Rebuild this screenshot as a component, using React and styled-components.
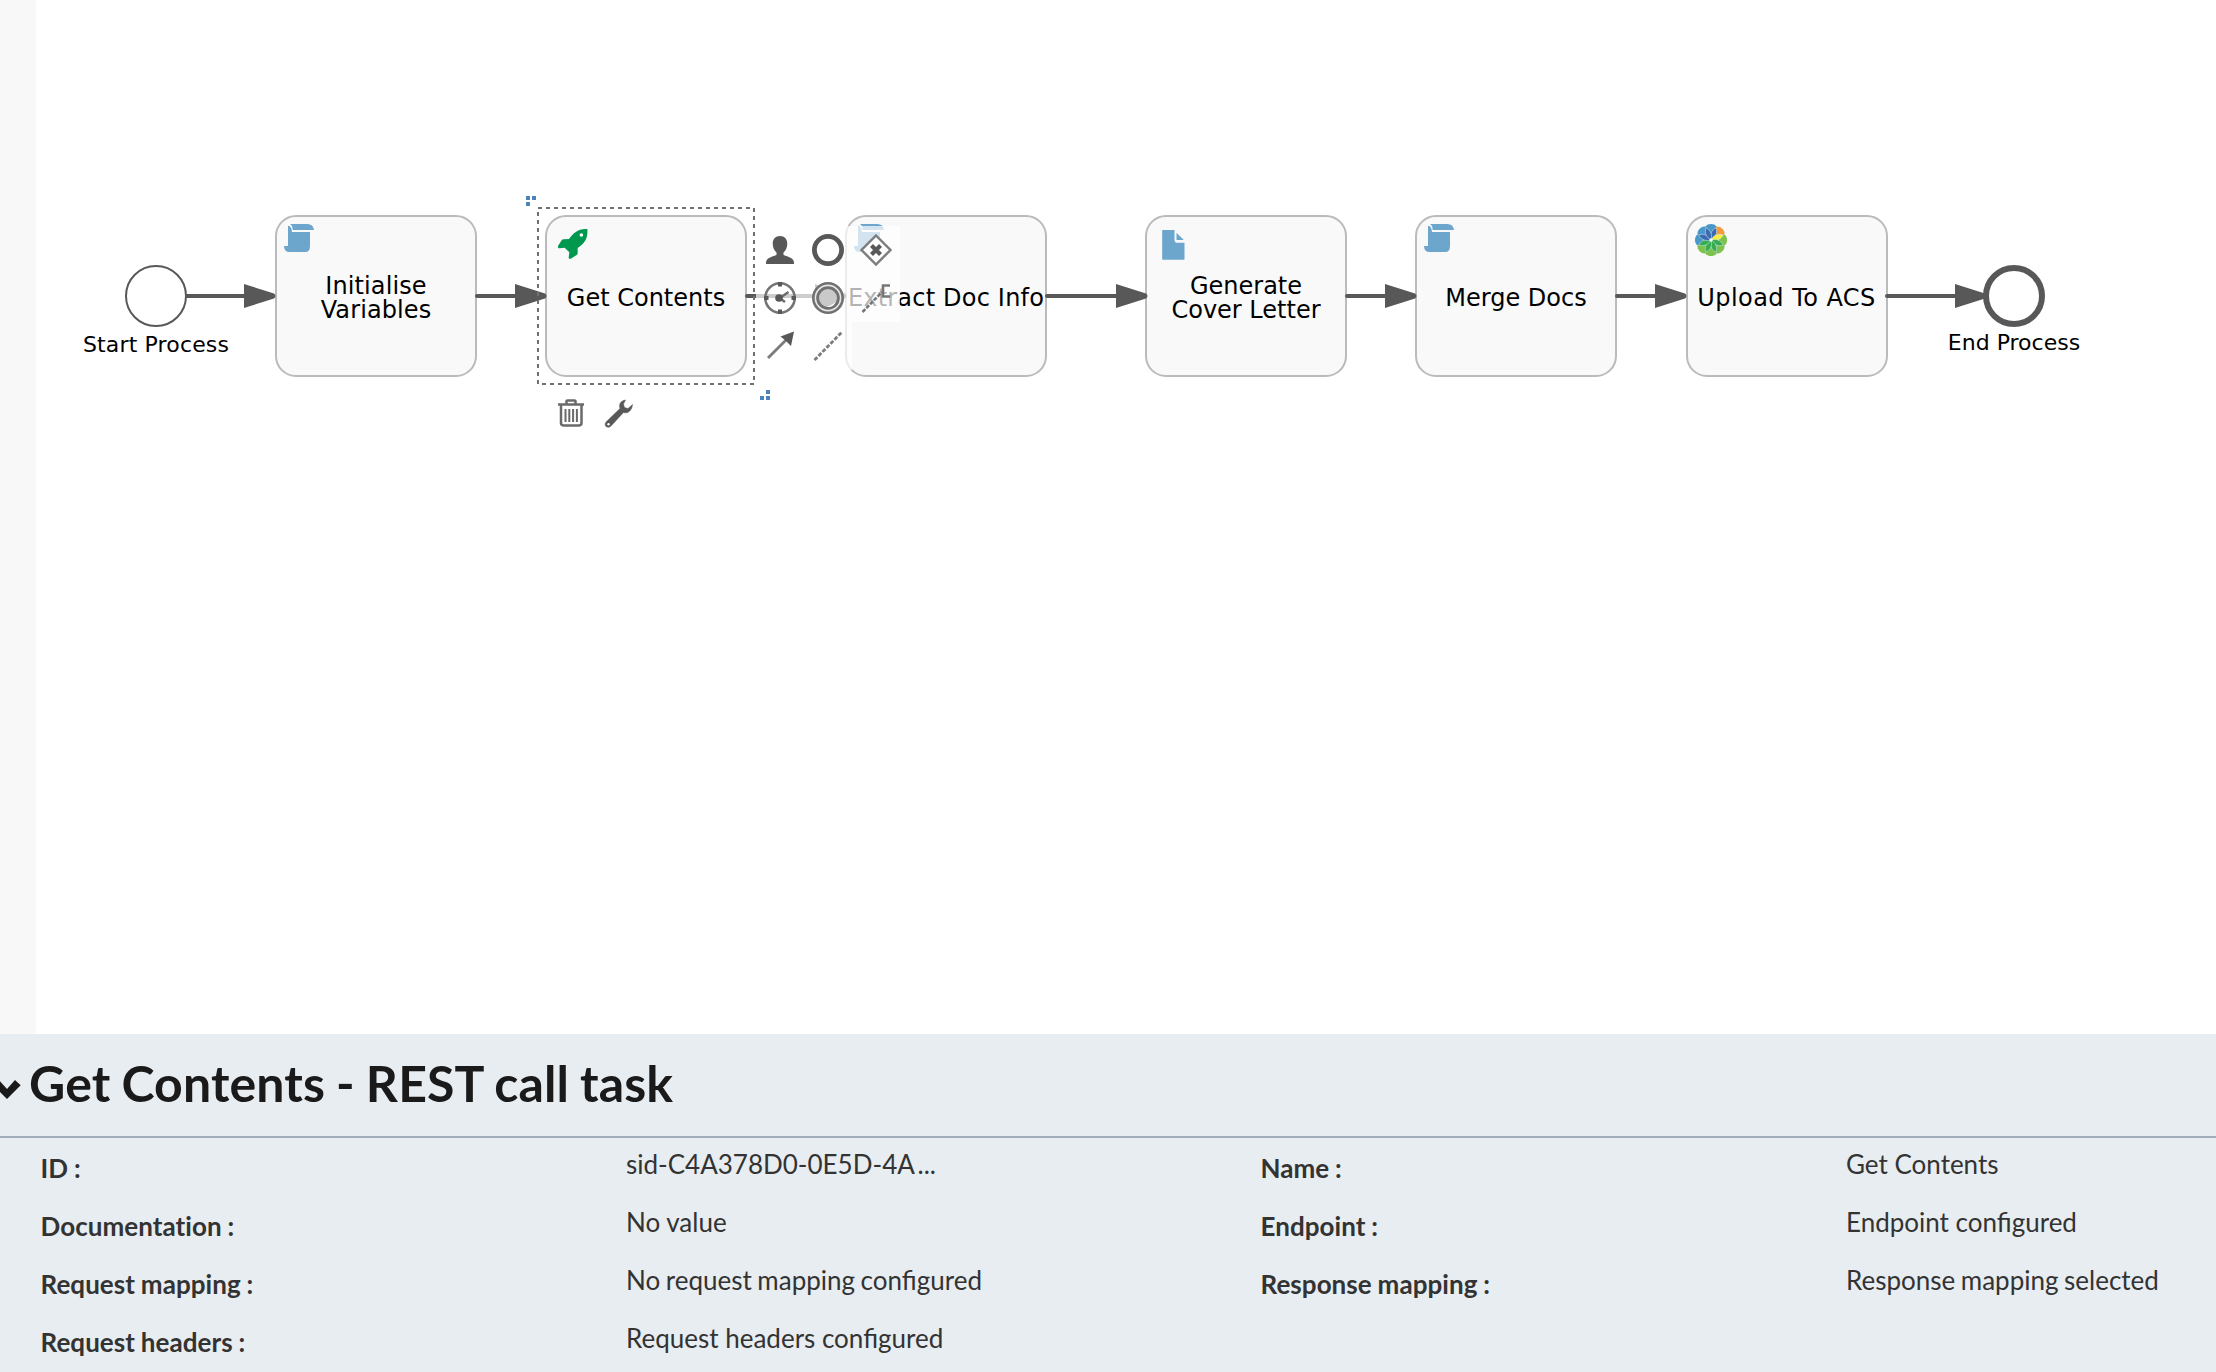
import React from "react";
import styled, { createGlobalStyle } from "styled-components";

const GlobalStyle = createGlobalStyle`
  * { box-sizing: border-box; }
  body { margin: 0; background: #fff; }
`;

const INK = "#585858";
const SKY = "#6ca6cd";

const Page = styled.div`
  display: flex;
  flex-direction: column;
  width: 2216px;
  height: 1372px;
  overflow: hidden;
  font-family: Lato, "Liberation Sans", sans-serif;
`;

const Workspace = styled.main`
  display: flex;
  flex: none;
  height: 1034px;
`;

const Gutter = styled.aside`
  width: 36px;
  background: #f8f8f8;
`;

const Canvas = styled.section`
  position: relative;
  flex: 1;
  background: #fff;
  font-family: Verdana, "DejaVu Sans", sans-serif;
  color: #000;
`;

/* Node coordinates count from the window edge, so the origin undoes the gutter width. */
const Origin = styled.div`
  position: absolute;
  left: -36px;
  top: 0;
`;

const Task = styled.div`
  position: absolute;
  left: ${(p) => p.$x}px;
  top: 215px;
  width: 202px;
  height: 162px;
  display: flex;
  align-items: center;
  justify-content: center;
  border: 2px solid #bbb;
  border-radius: 21px;
  background: #f9f9f9;
`;

const TaskLabel = styled.span`
  padding-top: 4px;
  font-size: 24px;
  line-height: 24px;
  letter-spacing: ${(p) => p.$track}px;
  text-align: center;
  white-space: pre;
`;

const TaskIcon = styled.div`
  position: absolute;
  left: ${(p) => p.$x}px;
  top: ${(p) => p.$y}px;
  line-height: 0;
`;

const EventRing = styled.div`
  position: absolute;
  left: ${(p) => p.$x}px;
  top: 265px;
  width: 62px;
  height: 62px;
  border: ${(p) => p.$weight}px solid ${INK};
  border-radius: 50%;
  background: #fff;
`;

const EventLabel = styled.span`
  position: absolute;
  left: ${(p) => p.$x}px;
  top: ${(p) => p.$y}px;
  transform: translateX(-50%);
  font-size: 22px;
  line-height: 26px;
  letter-spacing: ${(p) => p.$track}px;
  white-space: nowrap;
`;

const FlowSvg = styled.svg`
  position: absolute;
  left: 0;
  top: 190px;
`;

const PadCell = styled.div`
  position: absolute;
  left: ${(p) => p.$x}px;
  top: ${(p) => p.$y}px;
  width: 48px;
  height: 48px;
  display: grid;
  place-items: center;
  background: rgba(255, 255, 255, 0.7);
`;

const PadSvg = styled.svg`
  width: 32px;
  height: 32px;
  overflow: visible;
`;

const Details = styled.section`
  flex: 1;
  background: #e8edf1;
  color: #333;
`;

const DetailsHeader = styled.header`
  display: flex;
  align-items: center;
  height: 104px;
  border-bottom: 2px solid #a1adb8;
`;

const Chevron = styled.svg`
  flex: none;
  width: 21px;
  height: 19px;
  margin: 8px 8px 0 0;
`;

const Title = styled.h1`
  margin: 0 0 4px;
  font-size: 50px;
  font-weight: 700;
  line-height: 60px;
  letter-spacing: 0.13px;
  word-spacing: -1.3px;
  color: #1a1a1a;
  white-space: nowrap;
`;

const Properties = styled.dl`
  display: grid;
  grid-template-columns: 586px 634px 586px 1fr;
  grid-auto-rows: 58px;
  margin: 0;
  padding-left: 40px;
`;

const Term = styled.dt`
  padding: 14px 0 0 0.5px;
  font-size: 26px;
  font-weight: 700;
  line-height: 32px;
  letter-spacing: 0.05px;
  word-spacing: -0.5px;
  font-variant-ligatures: none;
  white-space: nowrap;
`;

const Value = styled.dd`
  margin: 0;
  padding-top: 10px;
  font-size: 26px;
  line-height: 32px;
  word-spacing: ${(p) => p.$gap}px;
  white-space: nowrap;
`;

function ScriptIcon() {
  return (
    <svg width="30" height="28" viewBox="672 102 90 84" fill={SKY}>
      <path d="M684 107C692 108 695 114 696 126L750 126V168Q750 186 736 186H688Q673 186 672 168H684Z" />
      <path d="M690 102H742Q760 102 762 120H698Q698 107 690 102Z" />
    </svg>
  );
}

function RocketIcon() {
  return (
    <svg width="30" height="30" viewBox="115 117 90 90">
      <path
        fill="#00984f"
        d="M203 117C176 116 162 128 148 147L132 148Q128 148 126 151L115 168Q114 175 120 175L135 173L149 187L147 203Q148 208 153 206L171 195Q174 193 174 189L174 174C197 159 205 144 203 117Z"
      />
      <circle cx="185" cy="135" r="5.5" fill="#f9f9f9" />
    </svg>
  );
}

function DocumentIcon() {
  return (
    <svg width="23" height="30" viewBox="188 120 68 90" fill={SKY}>
      <path d="M190 120H225V150Q225 158 233 158H255V207Q255 209 253 209H190Q188 209 188 207V122Q188 120 190 120Z" />
      <path d="M231 128L253 150H231Z" />
    </svg>
  );
}

const LOBES = [
  [0, "#4a98c9"],
  [315, "#4a98c9"],
  [270, "#4a98c9"],
  [45, "#f79a3c"],
  [90, "#7cc24c"],
  [135, "#7cc24c"],
  [180, "#7cc24c"],
  [225, "#7cc24c"],
];
const PETALS = [
  [22.5, "#3b6ab0"],
  [67.5, "#ffee3a"],
  [112.5, "#35ad4f"],
  [157.5, "#35ad4f"],
  [202.5, "#35ad4f"],
  [247.5, "#35ad4f"],
  [292.5, "#3b6ab0"],
  [337.5, "#3b6ab0"],
];

function FlowerIcon() {
  return (
    <svg width="32" height="32" viewBox="-16 -16 32 32">
      {LOBES.map(([a, c]) => (
        <path
          key={a}
          d="M0 0L-5.600 -13.400C-4.300 -15.200 -2.500 -16 0 -16C2.500 -16 4.300 -15.200 5.600 -13.400Z"
          fill={c}
          transform={`rotate(${a})`}
        />
      ))}
      {PETALS.map(([a, c]) => (
        <path
          key={a}
          d="M0 0C-3.100 -3.500 -3.800 -9 0 -13.200C3.800 -9 3.100 -3.500 0 0Z"
          fill={c}
          stroke="#cfe6ee"
          strokeWidth="0.5"
          transform={`rotate(${a})`}
        />
      ))}
      <circle r="1.7" fill="#eef6f6" />
    </svg>
  );
}

const TASKS = [
  { x: 275, label: "Initialise\nVariables", track: 0.1, icon: ScriptIcon, ix: 7, iy: 7 },
  { x: 545, label: "Get Contents", track: 0, icon: RocketIcon, ix: 11, iy: 12 },
  { x: 845, label: "Extract Doc Info", track: 0.2, icon: ScriptIcon, ix: 7, iy: 7 },
  { x: 1145, label: "Generate\nCover Letter", track: 0, icon: DocumentIcon, ix: 15, iy: 13 },
  { x: 1415, label: "Merge Docs", track: 0, icon: ScriptIcon, ix: 7, iy: 7 },
  { x: 1685.5, label: "Upload To ACS", track: 0.45, icon: FlowerIcon, ix: 7, iy: 7 },
];

const FLOWS = [
  [187, 276],
  [477, 547],
  [747, 847],
  [1047, 1148],
  [1347, 1417],
  [1617, 1687],
  [1887, 1987],
];

function Flows() {
  return (
    <FlowSvg width="2216" height="250" viewBox="0 190 2216 250" fill="none">
      {FLOWS.map(([from, to]) => (
        <g key={from}>
          <path d={`M${from} 296H${to - 20}`} stroke={INK} strokeWidth="4" strokeLinecap="round" />
          <path d={`M${to - 32} 284L${to - 2} 293.500Q${to + 1} 296 ${to - 2} 298.500L${to - 32} 308Z`} fill={INK} />
        </g>
      ))}
    </FlowSvg>
  );
}

function Selection() {
  return (
    <FlowSvg width="900" height="250" viewBox="0 190 900 250">
      <rect x="538" y="208" width="216" height="176" fill="none" stroke="#707070" strokeWidth="2" strokeDasharray="4 4" />
      <g fill="#4f82bd">
        <path d="M526 196h4v4h-4zM532 196h4v4h-4zM526 202h4v4h-4z" />
        <path d="M766 390h4v4h-4zM760 396h4v4h-4zM766 396h4v4h-4z" />
      </g>
    </FlowSvg>
  );
}

const PAD = [
  {
    x: 756, y: 226,
    art: (
      <g fill={INK}>
        <path d="M16 2C20.500 2 23.300 5 23.300 9.500C23.300 13.500 21.500 17 19.500 18.500V21C23 22.500 28 23.500 29.500 26.500C30 28 30 29 30 30H2C2 29 2 28 2.500 26.500C4 23.500 9 22.500 12.500 21V18.500C10.500 17 8.700 13.500 8.700 9.500C8.700 5 11.500 2 16 2Z" />
      </g>
    ),
  },
  { x: 804, y: 226, art: <circle cx="16" cy="16" r="13.600" fill="#fff" stroke={INK} strokeWidth="4.800" /> },
  {
    x: 852, y: 226,
    art: (
      <g stroke={INK}>
        <path d="M16 1.500L30.500 16L16 30.500L1.500 16Z" fill="#fcfcfc" strokeWidth="2.400" stroke="#7c7c7c" />
        <path d="M11.500 11.500L20.500 20.500M20.500 11.500L11.500 20.500" strokeWidth="4.200" />
      </g>
    ),
  },
  {
    x: 756, y: 274,
    art: (
      <g stroke={INK}>
        <circle cx="16" cy="16" r="14.700" strokeWidth="2.600" stroke="#747474" />
        <path d="M16 0V4.500M16 27.500V32M0 16H4.500M27.500 16H32" strokeWidth="4" />
        <path d="M16 16L24.500 10M16 16.500L21 20" strokeWidth="2.600" stroke="#6c6c6c" />
        <circle cx="15" cy="16" r="3.800" fill={INK} stroke="none" />
      </g>
    ),
  },
  {
    x: 804, y: 274,
    art: (
      <g stroke="#707070">
        <circle cx="16" cy="16" r="14.700" strokeWidth="2.600" fill="#e6e6e6" />
        <circle cx="16" cy="16" r="10.400" strokeWidth="2.800" fill="#c9c9c9" />
        <path d="M15 24.500Q21 23 24 19.500Q22 25 16 25Z" fill="#fff" stroke="none" />
      </g>
    ),
  },
  {
    x: 852, y: 274,
    art: (
      <g stroke="#777" strokeWidth="2.600">
        <path d="M2.500 30L22 10" strokeDasharray="4 1.400" />
        <path d="M30 3.500H23V14.500H30" />
      </g>
    ),
  },
  {
    x: 756, y: 322,
    art: (
      <g>
        <path d="M4 28L23 9" stroke="#7c7c7c" strokeWidth="2.800" />
        <path d="M30 1.500L16.500 6.500L21.500 10.500L27 16Z" fill={INK} />
      </g>
    ),
  },
  {
    x: 804, y: 322,
    art: <path d="M2.500 30L30.500 1.500" stroke="#7c7c7c" strokeWidth="2.800" strokeDasharray="4 1.700" />,
  },
  {
    x: 547, y: 390,
    art: (
      <g stroke="#6a6a6a" strokeWidth="2.500" strokeLinejoin="round">
        <path d="M3 6.500H29M11.500 6V3Q11.500 2.500 12.500 2.500H19.500Q20.500 2.500 20.500 3V6M6 7.500V25Q6 27.500 9 27.500H23.500Q26.500 27.500 26.500 25V7.500" />
        <path d="M10.500 11V24M14.300 11V24M18.100 11V24M21.900 11V24" strokeWidth="2" />
      </g>
    ),
  },
  {
    x: 595, y: 390,
    art: (
      <g>
        <path
          d="M22.500 2C18 2.500 15.500 6 17 10.500L3.500 23.500C1.500 25.500 2 28 3.500 28.800C5 29.800 7 29 8 28L20.500 14.500C25 16 29 12.500 29.500 6.500L25 10.500L21.500 9.500L20.500 6Z"
          fill={INK}
          stroke={INK}
          strokeWidth="0.5"
        />
        <circle cx="5.500" cy="26.300" r="1.200" fill="#fff" />
      </g>
    ),
  },
];

const PROPERTIES = [
  ["ID :", "sid-C4A378D0-0E5D-4A ...", "Name :", "Get Contents"],
  ["Documentation :", "No value", "Endpoint :", "Endpoint configured"],
  ["Request mapping :", "No request mapping configured", "Response mapping :", "Response mapping selected"],
  ["Request headers :", "Request headers configured"],
];

/* Long phrases and the truncated id sit tighter than short values. */
const gapOf = (text) => {
  if (text.endsWith("...")) return -3;
  return / mapping /.test(text) ? -1.1 : 0;
};

export default function App() {
  return (
    <Page>
      <GlobalStyle />
      <Workspace>
        <Gutter />
        <Canvas>
          <Origin>
            {TASKS.map(({ x, label, track, icon: Icon, ix, iy }) => (
              <Task key={x} $x={x}>
                <TaskIcon $x={ix} $y={iy}>
                  <Icon />
                </TaskIcon>
                <TaskLabel $track={track}>{label}</TaskLabel>
              </Task>
            ))}
            <Flows />
            <EventRing $x={125} $weight={2} />
            <EventLabel $x={156} $y={332} $track={0.15}>Start Process</EventLabel>
            <EventRing $x={1983} $weight={6} />
            <EventLabel $x={2014} $y={330} $track={0}>End Process</EventLabel>
            <Selection />
            {PAD.map(({ x, y, art }) => (
              <PadCell key={`${x}-${y}`} $x={x} $y={y}>
                <PadSvg viewBox="0 0 32 32" fill="none">{art}</PadSvg>
              </PadCell>
            ))}
          </Origin>
        </Canvas>
      </Workspace>
      <Details>
        <DetailsHeader>
          <Chevron viewBox="0 120 63 57">
            <path d="M45 120L62 136L21 177L-20 136L-3 120L21 147Z" fill="#1a1a1a" />
          </Chevron>
          <Title>Get Contents - REST call task</Title>
        </DetailsHeader>
        <Properties>
          {PROPERTIES.flatMap((row) =>
            row.map((text, i) =>
              i % 2 === 0 ? (
                <Term key={text}>{text}</Term>
              ) : (
                <Value key={`${row[i - 1]} value`} $gap={gapOf(text)}>{text}</Value>
              )
            )
          )}
        </Properties>
      </Details>
    </Page>
  );
}
